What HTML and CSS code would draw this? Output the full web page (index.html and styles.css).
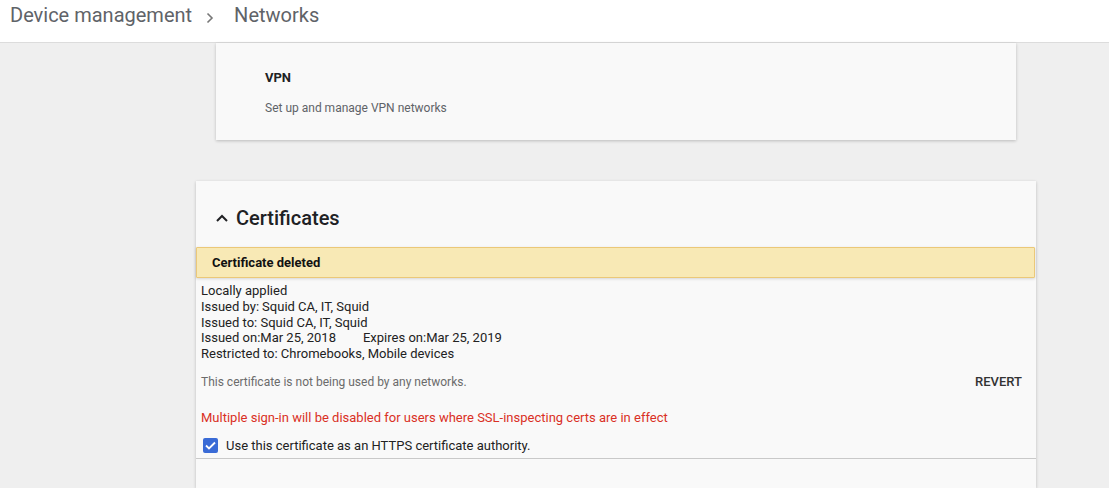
FILE: index.html
```html
<!DOCTYPE html>
<html>
<head>
<meta charset="utf-8">
<link rel="stylesheet" href="styles.css">
</head>
<body>
<header class="topbar">
  <span class="crumb">Device management</span>
  <svg class="sep" width="8" height="12" viewBox="0 0 8 12"><path d="M1.5 1.5 L6 6 L1.5 10.5" fill="none" stroke="#777" stroke-width="1.6"/></svg>
  <span class="crumb">Networks</span>
</header>
<main class="content">
  <section class="vpn-card">
    <div class="vpn-title">VPN</div>
    <div class="vpn-desc">Set up and manage VPN networks</div>
  </section>
  <section class="cert-card">
    <div class="cert-head">
      <svg class="chev" width="12" height="8" viewBox="0 0 12 8"><path d="M1 7 L6 2 L11 7" fill="none" stroke="#202124" stroke-width="2"/></svg>
      <h2 class="cert-title">Certificates</h2>
    </div>
    <div class="banner">Certificate deleted</div>
    <div class="details">
      <div>Locally applied</div>
      <div>Issued by:<span class="v1">Squid CA, IT, Squid</span></div>
      <div>Issued to: Squid CA, IT, Squid</div>
      <div>Issued on:Mar 25, 2018<span class="exp">Expires on:Mar 25, 2019</span></div>
      <div>Restricted to: Chromebooks, Mobile devices</div>
    </div>
    <div class="usage-row">
      <span class="usage">This certificate is not being used by any networks.</span>
      <span class="revert">REVERT</span>
    </div>
    <div class="warn">Multiple sign-in will be disabled for users where SSL-inspecting certs are in effect</div>
    <label class="check-row">
      <span class="box"><svg width="11" height="9" viewBox="0 0 11 9"><path d="M1 4.5 L4 7.5 L10 1.5" fill="none" stroke="#fff" stroke-width="1.8"/></svg></span>
      <span>Use this certificate as an HTTPS certificate authority.</span>
    </label>
    <div class="rest"></div>
  </section>
</main>
</body>
</html>
```
FILE: styles.css
```css
* { box-sizing: border-box; }
html, body { margin: 0; padding: 0; }
body {
  font-family: Roboto, "Liberation Sans", Arial, sans-serif;
  background: #efefef;
  width: 1109px;
  height: 488px;
  overflow: hidden;
}
.topbar {
  height: 43px;
  background: #fff;
  border-bottom: 1px solid #dcdcdc;
  display: flex;
  align-items: flex-start;
  padding: 3px 0 0 10px;
  font-size: 20px;
  color: #5f6368;
}
.sep {
  margin: 9px 20px 0 14px;
}
.content {
  display: flex;
  flex-direction: column;
}
.vpn-card {
  margin-left: 216px;
  width: 800px;
  height: 97px;
  background: #f9f9f9;
  box-shadow: 0 1px 3px rgba(0,0,0,0.22);
  padding: 27px 0 0 49px;
}
.vpn-title {
  font-size: 13px;
  font-weight: 700;
  color: #202124;
  line-height: 16px;
}
.vpn-desc {
  margin-top: 14px;
  font-size: 12px;
  color: #5f6368;
  line-height: 16px;
}
.cert-card {
  margin: 41px 0 0 196px;
  width: 840px;
  height: 307px;
  background: #f9f9f9;
  box-shadow: 0 1px 3px rgba(0,0,0,0.22);
}
.cert-head {
  height: 66px;
  display: flex;
  align-items: center;
  padding: 8px 0 0 20px;
}
.chev { margin-right: 8px; }
.cert-title {
  margin: 0;
  font-size: 20px;
  font-weight: 500;
  color: #202124;
}
.banner {
  height: 31px;
  width: 839px;
  background: #f8e9b5;
  border: 1px solid #ebc878;
  border-radius: 1px;
  box-shadow: 0 1px 3px rgba(0,0,0,0.15);
  padding-left: 15px;
  display: flex;
  align-items: center;
  font-size: 13px;
  font-weight: 700;
  color: #111;
}
.details {
  padding: 5px 0 0 5px;
  font-size: 13px;
  line-height: 15.8px;
  color: #222;
}
.v1 { margin-left: 3px; }
.exp { margin-left: 27px; }
.usage-row {
  display: flex;
  justify-content: space-between;
  align-items: center;
  padding: 10px 14px 0 5px;
  height: 30px;
}
.usage {
  font-size: 12px;
  color: #6b6b6b;
}
.revert {
  font-size: 13px;
  font-weight: 500;
  color: #333;
}
.warn {
  padding: 18px 0 0 5px;
  font-size: 13px;
  color: #d93025;
  line-height: 16px;
}
.check-row {
  display: flex;
  align-items: center;
  padding: 10px 0 0 7px;
  font-size: 13px;
  color: #222;
  height: 30px;
}
.box {
  width: 15px;
  height: 15px;
  background: #3a6bd6;
  border-radius: 2px;
  display: flex;
  align-items: center;
  justify-content: center;
  margin-right: 8px;
}
.rest {
  margin-top: 2px;
  border-top: 1px solid #c9c9c9;
}
```
